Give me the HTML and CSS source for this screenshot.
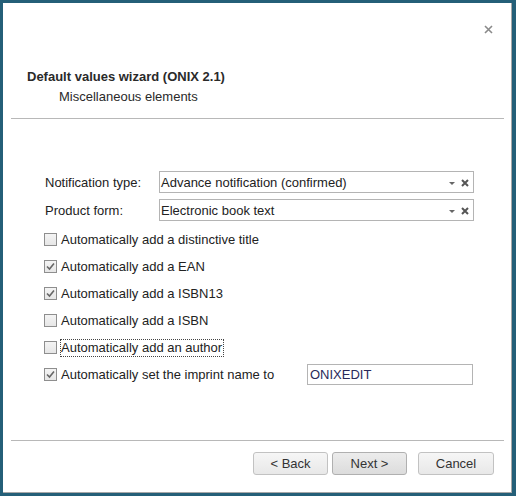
FILE: index.html
```html
<!DOCTYPE html>
<html>
<head>
<meta charset="utf-8">
<link rel="stylesheet" href="styles.css">
</head>
<body>
<div class="dialog">
  <div class="topbar">
    <span class="close">
      <svg width="9" height="9" viewBox="0 0 9 9"><path d="M1 1 L8 8 M8 1 L1 8" stroke="#8a8a8a" stroke-width="1.6" fill="none"/></svg>
    </span>
  </div>
  <div class="header">
    <div class="title">Default values wizard (ONIX 2.1)</div>
    <div class="subtitle">Miscellaneous elements</div>
  </div>
  <div class="sep"></div>
  <div class="form">
    <div class="field">
      <label class="flabel">Notification type:</label>
      <div class="combo">
        <span class="ctext">Advance notification (confirmed)</span>
        <span class="arrow"></span>
        <svg class="clear" width="8" height="8" viewBox="0 0 8 8"><path d="M1 1 L7 7 M7 1 L1 7" stroke="#555" stroke-width="2" fill="none"/></svg>
      </div>
    </div>
    <div class="field">
      <label class="flabel">Product form:</label>
      <div class="combo">
        <span class="ctext">Electronic book text</span>
        <span class="arrow"></span>
        <svg class="clear" width="8" height="8" viewBox="0 0 8 8"><path d="M1 1 L7 7 M7 1 L1 7" stroke="#555" stroke-width="2" fill="none"/></svg>
      </div>
    </div>
    <div class="check"><span class="box"></span><span class="clabel">Automatically add a distinctive title</span></div>
    <div class="check"><span class="box"><svg width="11" height="11" viewBox="0 0 11 11"><path d="M2 5.5 L4.5 8 L9 2.5" stroke="#666" stroke-width="1.6" fill="none"/></svg></span><span class="clabel">Automatically add a EAN</span></div>
    <div class="check"><span class="box"><svg width="11" height="11" viewBox="0 0 11 11"><path d="M2 5.5 L4.5 8 L9 2.5" stroke="#666" stroke-width="1.6" fill="none"/></svg></span><span class="clabel">Automatically add a ISBN13</span></div>
    <div class="check"><span class="box"></span><span class="clabel">Automatically add a ISBN</span></div>
    <div class="check"><span class="box"></span><span class="clabel focus">Automatically add an author</span></div>
    <div class="check"><span class="box"><svg width="11" height="11" viewBox="0 0 11 11"><path d="M2 5.5 L4.5 8 L9 2.5" stroke="#666" stroke-width="1.6" fill="none"/></svg></span><span class="clabel imprint">Automatically set the imprint name to</span><div class="input">ONIXEDIT</div></div>
  </div>
  <div class="footer">
    <div class="sep2"></div>
    <div class="buttons">
      <button class="btn">&lt; Back</button>
      <button class="btn next">Next &gt;</button>
      <button class="btn cancel">Cancel</button>
    </div>
  </div>
</div>
</body>
</html>
```
FILE: styles.css
```css
html, body {
  margin: 0;
  padding: 0;
}
body {
  background: #245f78;
  width: 516px;
  height: 496px;
  overflow: hidden;
  font-family: "Liberation Sans", Arial, sans-serif;
  font-size: 13px;
  color: #222;
}
.dialog {
  margin: 3px 0 0 3px;
  background: #fff;
  border-right: 1px solid #a8a8a8;
  border-bottom: 1px solid #a8a8a8;
  box-sizing: border-box;
  width: 509px;
  height: 490px;
  display: flex;
  flex-direction: column;
  position: relative;
}
.topbar {
  height: 43px;
  display: flex;
  justify-content: flex-end;
  align-items: flex-start;
  padding: 22px 18px 0 0;
  box-sizing: border-box;
}
.close {
  display: block;
  width: 9px;
  height: 9px;
}
.close svg { display: block; }
.header {
  padding-left: 24px;
  padding-top: 21px;
}
.title {
  font-weight: bold;
  line-height: 20px;
  color: #2a2a2a;
}
.subtitle {
  line-height: 20px;
  padding-left: 32px;
  color: #2a2a2a;
}
.sep {
  height: 1px;
  background: #b8b8b8;
  margin: 11px 7px 0 8px;
}
.form {
  padding: 52px 0 0 41px;
  display: flex;
  flex-direction: column;
}
.field {
  display: flex;
  align-items: center;
  height: 22px;
  margin-bottom: 6px;
}
.field + .field { margin-bottom: 5px; }
.flabel {
  width: 114px;
  line-height: 22px;
  padding-left: 1px;
  padding-top: 2px;
}
.combo {
  width: 315px;
  height: 22px;
  box-sizing: border-box;
  border: 1px solid #b4b4b4;
  display: flex;
  align-items: center;
  padding: 1px 4px 0 1px;
}
.ctext {
  flex: 1;
  line-height: 18px;
}
.arrow {
  width: 0;
  height: 0;
  border-left: 3px solid transparent;
  border-right: 3px solid transparent;
  border-top: 3px solid #666;
  margin-right: 6px;
  margin-top: 1px;
}
.clear { display: block; }
.check {
  display: flex;
  align-items: center;
  height: 27px;
}
.box {
  width: 13px;
  height: 13px;
  box-sizing: border-box;
  border: 1px solid #8e8e8e;
  background: linear-gradient(#f4f4f4, #e6e6e6);
  margin-left: 0;
  margin-right: 3px;
  display: flex;
  align-items: center;
  justify-content: center;
}
.box svg { display: block; }
.clabel {
  line-height: 16px;
  border: 1px dotted transparent;
  padding: 0 1px 0 0;
}
.clabel.focus {
  border-color: #444;
}
.imprint {
  width: 244px;
}
.input {
  width: 166px;
  height: 21px;
  box-sizing: border-box;
  border: 1px solid #b4b4b4;
  line-height: 19px;
  padding-left: 2px;
  color: #2a2a5a;
}
.footer {
  margin-top: auto;
  padding-bottom: 17px;
}
.sep2 {
  height: 1px;
  background: #b8b8b8;
  margin: 0 7px 11px 8px;
}
.buttons {
  display: flex;
  justify-content: flex-end;
  padding-right: 17px;
}
.btn {
  width: 75px;
  height: 23px;
  box-sizing: border-box;
  border: 1px solid #c2c2c2;
  border-radius: 3px;
  background: linear-gradient(#f6f6f6, #e8e8e8);
  font-family: "Liberation Sans", Arial, sans-serif;
  font-size: 13px;
  color: #333;
  padding: 0;
  margin: 0;
}
.btn.next {
  margin-left: 4px;
  background: linear-gradient(#ececec, #dcdcdc);
  border-color: #b0b0b0;
}
.btn.cancel {
  margin-left: 11px;
  width: 76px;
}
```
